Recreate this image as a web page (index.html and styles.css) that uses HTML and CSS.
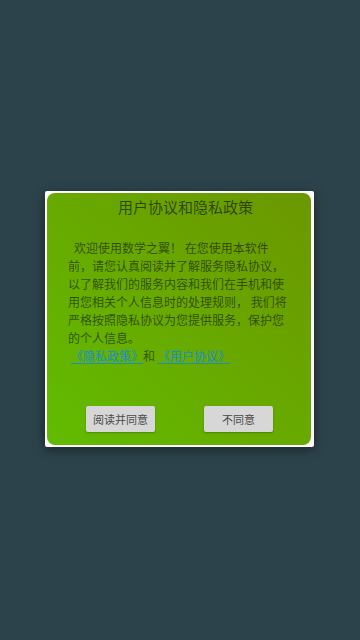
FILE: index.html
```html
<!DOCTYPE html>
<html lang="zh-CN">
<head>
<meta charset="utf-8">
<title>用户协议和隐私政策</title>
<link rel="stylesheet" href="styles.css">
</head>
<body>
<div class="screen">
  <div class="dialog">
    <div class="panel">
      <h1 class="title">用户协议和隐私政策</h1>
      <p class="body"><span class="indent"></span>欢迎使用数学之翼！ 在您使用本软件前，请您认真阅读并了解服务隐私协议，以了解我们的服务内容和我们在手机和使用您相关个人信息时的处理规则， 我们将严格按照隐私协议为您提供服务，保护您的个人信息。<br><span class="lead"></span><a class="link" href="#">《隐私政策》</a>和 <a class="link" href="#">《用户协议》</a></p>
      <div class="actions">
        <button class="btn">阅读并同意</button>
        <button class="btn">不同意</button>
      </div>
    </div>
  </div>
</div>
</body>
</html>
```
FILE: styles.css
```css
* { box-sizing: border-box; }
html, body { margin: 0; padding: 0; }
body {
  background: #2d434b;
  font-family: "Noto Sans CJK SC", "Noto Sans", sans-serif;
}
.screen {
  width: 360px;
  height: 640px;
  display: flex;
  align-items: center;
  justify-content: center;
}
.dialog {
  width: 269px;
  height: 256px;
  margin-left: -1px;
  margin-top: -2px;
  background: #ffffff;
  border-radius: 2px;
  padding: 2px 3px 2px 2px;
  box-shadow: 0 3px 12px rgba(0, 0, 0, 0.45);
  display: flex;
}
.panel {
  flex: 1;
  border-radius: 8px;
  background: linear-gradient(to top right, #61bc00 0%, #68a900 50%, #6b9700 100%);
  display: flex;
  flex-direction: column;
}
.title {
  margin: 0;
  padding: 3px 0 0 13px;
  font-size: 15px;
  line-height: 22px;
  font-weight: normal;
  text-align: center;
  color: rgba(0, 0, 0, 0.58);
}
.body {
  margin: 21px 0 0 0;
  padding: 0 21px;
  font-size: 12px;
  line-height: 18px;
  color: rgba(0, 0, 0, 0.55);
}
.indent { display: inline-block; width: 6px; }
.lead { display: inline-block; width: 3px; }
.link {
  color: #178fcc;
  text-decoration: underline;
  text-underline-offset: 2px;
}
.actions {
  margin-top: auto;
  margin-bottom: 13px;
  padding: 0 38px 0 39px;
  display: flex;
  justify-content: space-between;
}
.btn {
  width: 69px;
  height: 26px;
  padding: 0;
  border: none;
  border-radius: 2px;
  background: #d6d7d6;
  box-shadow: 0 1px 2px rgba(0, 0, 0, 0.25);
  font-family: "Noto Sans CJK SC", sans-serif;
  font-size: 11px;
  color: #4a4a4a;
}
```
